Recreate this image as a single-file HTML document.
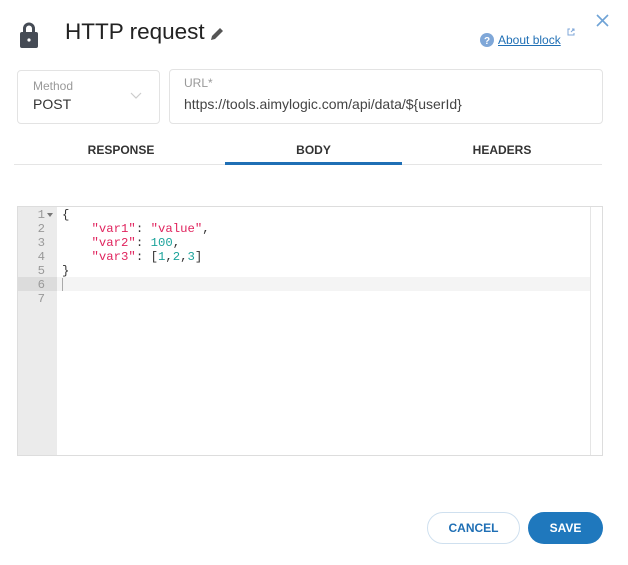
<!DOCTYPE html>
<html><head><style>
*{box-sizing:border-box;margin:0;padding:0}
body{width:628px;height:565px;background:#fff;font-family:"Liberation Sans",sans-serif;position:relative;overflow:hidden;color:#333}
.a{position:absolute}
.box{border:1px solid #e3e3e3;border-radius:4px}
.lbl{font-size:12px;color:#999}
.tab{font-size:12px;font-weight:bold;color:#333;text-align:center;top:143px}
.code{font-family:"Liberation Mono",monospace;font-size:12.3px;line-height:14px}
.ln{color:#999;text-align:right;width:28px}
.s{color:#e0245e}.n{color:#1ca39b}
</style></head><body>
<svg class="a" style="left:20px;top:21px" width="18" height="28" viewBox="0 0 18 28"><path d="M4.5 12V7.5a4.5 4.5 0 0 1 9 0V12" fill="none" stroke="#454b55" stroke-width="3"/><rect x="0" y="11" width="18" height="16" rx="2" fill="#454b55"/><circle cx="9" cy="19" r="1.6" fill="#fff"/></svg>
<div class="a" style="left:65px;top:19px;font-size:22.5px;color:#222">HTTP request</div>
<svg class="a" style="left:209px;top:26px" width="16" height="16" viewBox="0 0 16 16"><path d="M2 14l1-4 8-8 3 3-8 8z" fill="#555"/></svg>
<svg class="a" style="left:480px;top:33px" width="14" height="14"><circle cx="7" cy="7" r="7" fill="#7fa7d8"/><text x="7" y="11" font-size="10" font-weight="bold" fill="#fff" text-anchor="middle" font-family="Liberation Sans">?</text></svg>
<div class="a" style="left:498px;top:33px;font-size:12px;color:#1f6fb5;text-decoration:underline">About block</div>
<svg class="a" style="left:567px;top:28px" width="8" height="8" viewBox="0 0 8 8"><path d="M3 1H1v6h6V5M4 4l3-3M5 1h2v2" fill="none" stroke="#7fa7d8" stroke-width="1"/></svg>
<svg class="a" style="left:596px;top:14px" width="13" height="13"><path d="M1 1l11 11M12 1L1 12" stroke="#6fa3d6" stroke-width="1.6"/></svg>
<div class="a box" style="left:17px;top:70px;width:143px;height:54px"></div>
<div class="a lbl" style="left:33px;top:79px">Method</div>
<div class="a" style="left:33px;top:96px;font-size:14px">POST</div>
<svg class="a" style="left:130px;top:92px" width="12" height="8"><path d="M1 1l5 5 5-5" fill="none" stroke="#ccc" stroke-width="1.2"/></svg>
<div class="a box" style="left:169px;top:69px;width:434px;height:55px"></div>
<div class="a lbl" style="left:184px;top:76px">URL*</div>
<div class="a" style="left:184px;top:96px;font-size:14px;color:#444">https://tools.aimylogic.com/api/data/${userId}</div>
<div class="a tab" style="left:17px;width:208px">RESPONSE</div>
<div class="a tab" style="left:225px;width:177px">BODY</div>
<div class="a tab" style="left:402px;width:200px">HEADERS</div>
<div class="a" style="left:14px;top:164px;width:588px;height:1px;background:#e5e5e5"></div>
<div class="a" style="left:225px;top:162px;width:177px;height:3px;background:#1f6fb5"></div>
<div class="a" style="left:17px;top:206px;width:586px;height:250px;border:1px solid #ddd"></div>
<div class="a" style="left:18px;top:207px;width:39px;height:248px;background:#ebebeb"></div>
<div class="a" style="left:18px;top:277px;width:39px;height:14px;background:#dcdcdc"></div>
<div class="a" style="left:57px;top:277px;width:533px;height:14px;background:#f4f4f4"></div>
<div class="a" style="left:590px;top:207px;width:1px;height:248px;background:#e5e5e5"></div>
<div class="a" style="left:62px;top:278px;width:1px;height:13px;background:#aaa"></div>
<div class="a code ln" style="left:17px;top:208px">1<br>2<br>3<br>4<br>5<br>6<br>7</div>
<div class="a" style="left:47px;top:213px;width:0;height:0;border-left:3px solid transparent;border-right:3px solid transparent;border-top:4px solid #777"></div>
<div class="a code" style="left:62px;top:208px;white-space:pre;color:#333">{
    <span class="s">"var1"</span>: <span class="s">"value"</span>,
    <span class="s">"var2"</span>: <span class="n">100</span>,
    <span class="s">"var3"</span>: [<span class="n">1</span>,<span class="n">2</span>,<span class="n">3</span>]
}</div>
<div class="a" style="left:427px;top:512px;width:93px;height:32px;border:1px solid #cfe0ef;border-radius:16px;font-size:12px;font-weight:bold;color:#1f6fb5;text-align:center;line-height:30px">CANCEL</div>
<div class="a" style="left:528px;top:512px;width:75px;height:32px;background:#1f78bd;border-radius:16px;font-size:12px;font-weight:bold;color:#fff;text-align:center;line-height:32px">SAVE</div>
</body></html>
